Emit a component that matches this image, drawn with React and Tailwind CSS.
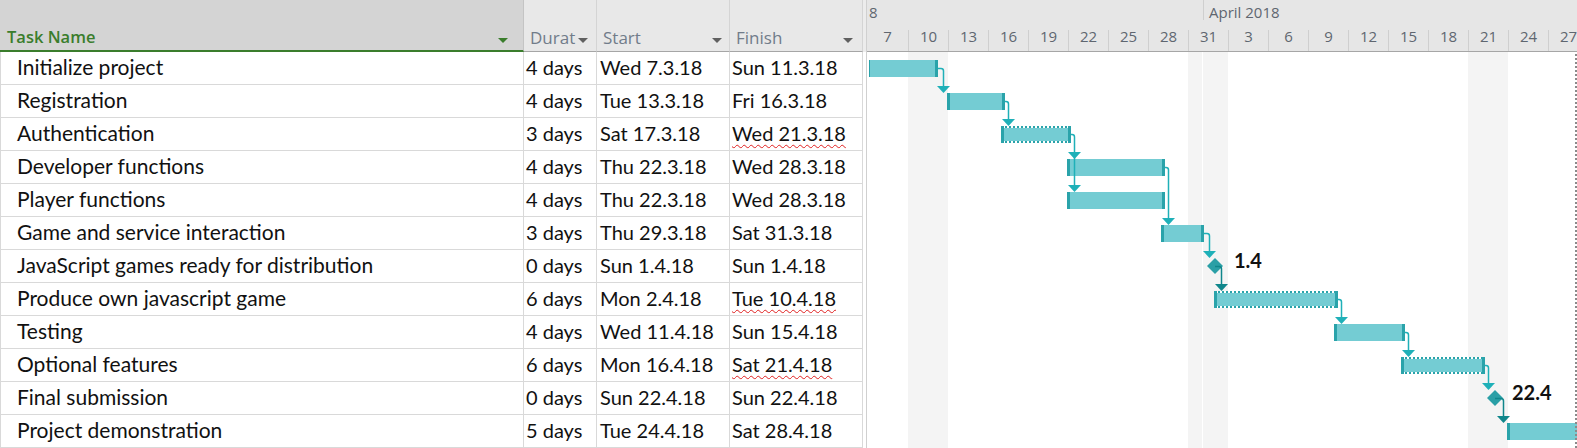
import React from "react";

const ROWS = [
  { name: "Initialize project", dur: "4 days", start: "Wed 7.3.18", finish: "Sun 11.3.18" },
  { name: "Registration", dur: "4 days", start: "Tue 13.3.18", finish: "Fri 16.3.18" },
  { name: "Authentication", dur: "3 days", start: "Sat 17.3.18", finish: "Wed 21.3.18", wavy: true },
  { name: "Developer functions", dur: "4 days", start: "Thu 22.3.18", finish: "Wed 28.3.18" },
  { name: "Player functions", dur: "4 days", start: "Thu 22.3.18", finish: "Wed 28.3.18" },
  { name: "Game and service interaction", dur: "3 days", start: "Thu 29.3.18", finish: "Sat 31.3.18" },
  { name: "JavaScript games ready for distribution", dur: "0 days", start: "Sun 1.4.18", finish: "Sun 1.4.18" },
  { name: "Produce own javascript game", dur: "6 days", start: "Mon 2.4.18", finish: "Tue 10.4.18", wavy: true },
  { name: "Testing", dur: "4 days", start: "Wed 11.4.18", finish: "Sun 15.4.18" },
  { name: "Optional features", dur: "6 days", start: "Mon 16.4.18", finish: "Sat 21.4.18", wavy: true },
  { name: "Final submission", dur: "0 days", start: "Sun 22.4.18", finish: "Sun 22.4.18" },
  { name: "Project demonstration", dur: "5 days", start: "Tue 24.4.18", finish: "Sat 28.4.18" },
];

const TICKS = ["7", "10", "13", "16", "19", "22", "25", "28", "31", "3", "6", "9", "12", "15", "18", "21", "24", "27"];

const X0 = 867;
const Y0 = 52;
const X = (a) => a - X0;
const Y = (a) => a - Y0;

const BARS = [
  { row: 0, x1: 869, x2: 937, lcap: 1 },
  { row: 1, x1: 947, x2: 1004 },
  { row: 2, x1: 1001, x2: 1070, dotted: true },
  { row: 3, x1: 1067, x2: 1164 },
  { row: 4, x1: 1067, x2: 1164 },
  { row: 5, x1: 1161, x2: 1203 },
  { row: 7, x1: 1214, x2: 1337, dotted: true },
  { row: 8, x1: 1334, x2: 1404 },
  { row: 9, x1: 1401, x2: 1484, dotted: true },
  { row: 11, x1: 1507, x2: 1600 },
];

const LINKS = [
  { x2: 937, yc: 68, cx: 943, tips: [93] },
  { x2: 1004, yc: 101, cx: 1008, tips: [126] },
  { x2: 1070, yc: 134, cx: 1074, tips: [159, 192] },
  { x2: 1164, yc: 167, cx: 1168, tips: [225] },
  { x2: 1203, yc: 233, cx: 1209, tips: [258] },
  { x2: 1337, yc: 299, cx: 1341, tips: [324] },
  { x2: 1404, yc: 332, cx: 1408, tips: [357] },
  { x2: 1484, yc: 365, cx: 1488, tips: [390] },
];

const MILESTONES = [
  { cx: 1215, cy: 266, lx: 1221, tip: 291, label: "1.4", tx: 1234, ty: 268 },
  { cx: 1495, cy: 398, lx: 1503, tip: 423, label: "22.4", tx: 1512, ty: 400 },
];

const TEAL = "#74ccd3";
const CAP = "#2aa3aa";
const LINE = "#1fb0b8";
const DARK = "#0f868b";

function Arrow({ cx, tip, color }) {
  return (
    <polygon
      points={`${X(cx) - 6.5},${Y(tip) - 7} ${X(cx) + 6.5},${Y(tip) - 7} ${X(cx)},${Y(tip)}`}
      fill={color}
    />
  );
}

function GanttChart() {
  return (
    <svg width="710" height="396" className="block">
      {[908, 1188, 1468].map((a) => (
        <rect key={a} x={X(a)} y={0} width={40} height={396} fill="#f4f4f4" />
      ))}
      <rect x={X(1202)} y={0} width={1} height={396} fill="#ffffff" />

      {BARS.map((b, i) => {
        const top = 8 + 33 * b.row;
        const w = b.x2 - b.x1 + 1;
        return (
          <g key={i}>
            <rect x={X(b.x1)} y={top} width={w} height={17} fill={TEAL} />
            {b.dotted && (
              <g>
                <line x1={X(b.x1)} x2={X(b.x2) + 1} y1={top + 1} y2={top + 1} stroke="#ffffff" strokeWidth={2} />
                <line x1={X(b.x1)} x2={X(b.x2) + 1} y1={top + 1} y2={top + 1} stroke={CAP} strokeWidth={2} strokeDasharray="2 2" />
                <line x1={X(b.x1)} x2={X(b.x2) + 1} y1={top + 16} y2={top + 16} stroke="#ffffff" strokeWidth={2} />
                <line x1={X(b.x1)} x2={X(b.x2) + 1} y1={top + 16} y2={top + 16} stroke={CAP} strokeWidth={2} strokeDasharray="2 2" />
              </g>
            )}
            <rect x={X(b.x1)} y={top} width={b.lcap || 3} height={17} fill={CAP} />
            <rect x={X(b.x2) - 2} y={top} width={3} height={17} fill={CAP} />
          </g>
        );
      })}

      {LINKS.map((l, i) => {
        const last = l.tips[l.tips.length - 1];
        const vx = X(l.cx) + 0.5;
        return (
          <g key={i}>
            <path
              d={`M ${X(l.x2) + 1} ${Y(l.yc) + 0.5} H ${vx - 2.5} Q ${vx} ${Y(l.yc) + 0.5} ${vx} ${Y(l.yc) + 3} V ${Y(last) - 6}`}
              stroke={LINE}
              strokeWidth={1.5}
              fill="none"
            />
            {l.tips.map((t) => (
              <Arrow key={t} cx={l.cx + 0.5} tip={t} color={LINE} />
            ))}
          </g>
        );
      })}

      {MILESTONES.map((m, i) => (
        <g key={i}>
          <polygon
            points={`${X(m.cx)},${Y(m.cy) - 8} ${X(m.cx) + 8},${Y(m.cy)} ${X(m.cx)},${Y(m.cy) + 8} ${X(m.cx) - 8},${Y(m.cy)}`}
            fill="#2a9fa6"
          />
          <path
            d={`M ${X(m.cx)} ${Y(m.cy) + 0.5} H ${X(m.lx) - 2} Q ${X(m.lx) + 0.5} ${Y(m.cy) + 0.5} ${X(m.lx) + 0.5} ${Y(m.cy) + 3} V ${Y(m.tip) - 6}`}
            stroke={DARK}
            strokeWidth={1.5}
            fill="none"
          />
          <Arrow cx={m.lx + 0.5} tip={m.tip} color={DARK} />
          <text
            x={X(m.tx)}
            y={Y(m.ty)}
            fontFamily="Lato, sans-serif"
            fontWeight="700"
            fontSize="20"
            fill="#111111"
          >
            {m.label}
          </text>
        </g>
      ))}

      <line x1={X(1575) + 1} x2={X(1575) + 1} y1={2} y2={396} stroke="#8a8a8a" strokeWidth={2} strokeDasharray="2 2" />
    </svg>
  );
}

function GrayTri() {
  return <span className="mb-[3px] block h-0 w-0 shrink-0 border-x-[5px] border-t-[5px] border-x-transparent border-t-[#606060]" />;
}

export default function App() {
  return (
    <div className="flex h-[448px] w-[1577px] overflow-hidden bg-white font-['Lato',sans-serif] text-[#111]">
      {/* Table */}
      <div className="flex w-[863px] shrink-0 flex-col">
        <div className="flex h-[52px] shrink-0 font-['Open_Sans',sans-serif]">
          <div className="flex w-[524px] shrink-0 items-end justify-between border-b-2 border-r border-b-[#3a7d2c] border-r-[#c4c4c4] bg-[#d4d4d4] pb-[5px] pl-[7px] pr-[15px]">
            <span className="text-[16.5px] font-semibold leading-none text-[#3a7d2c]">Task Name</span>
            <span className="mb-[2px] block h-0 w-0 shrink-0 border-x-[5px] border-t-[5px] border-x-transparent border-t-[#3a7d2c]" />
          </div>
          <div className="flex w-[73px] shrink-0 items-end justify-between border-b border-r border-b-[#a6a6a6] border-r-[#d4d4d4] bg-[#e8e8e8] pb-[5px] pl-[6px] pr-[8px]">
            <span className="text-[17px] leading-none text-[#717c8a]">Durat</span>
            <GrayTri />
          </div>
          <div className="flex w-[133px] shrink-0 items-end justify-between border-b border-r border-b-[#a6a6a6] border-r-[#d4d4d4] bg-[#e8e8e8] pb-[5px] pl-[6px] pr-[7px]">
            <span className="text-[17px] leading-none text-[#717c8a]">Start</span>
            <GrayTri />
          </div>
          <div className="flex w-[133px] shrink-0 items-end justify-between border-b border-r border-b-[#a6a6a6] border-r-[#d4d4d4] bg-[#e8e8e8] pb-[5px] pl-[6px] pr-[9px]">
            <span className="text-[17px] leading-none text-[#717c8a]">Finish</span>
            <GrayTri />
          </div>
        </div>
        {ROWS.map((r, i) => (
          <div key={i} className="flex h-[33px] shrink-0 border-b border-[#d9d9d9] text-[20px]">
            <div className="flex w-[524px] shrink-0 items-center border-x border-[#d9d9d9] pb-[3px] pl-[16px] text-[21px] whitespace-nowrap">{r.name}</div>
            <div className="flex w-[73px] shrink-0 items-center border-r border-[#d9d9d9] pb-[3px] pl-[2px] whitespace-nowrap">{r.dur}</div>
            <div className="flex w-[133px] shrink-0 items-center border-r border-[#d9d9d9] pb-[3px] pl-[3px] whitespace-nowrap">{r.start}</div>
            <div className="flex w-[133px] shrink-0 items-center border-r border-[#d9d9d9] pb-[3px] pl-[2px] whitespace-nowrap">
              {r.wavy ? (
                <span className="underline decoration-[#e02020] decoration-wavy decoration-1 underline-offset-[3px]">{r.finish}</span>
              ) : (
                r.finish
              )}
            </div>
          </div>
        ))}
      </div>

      {/* Split bar */}
      <div className="flex w-[3px] shrink-0 flex-col">
        <div className="h-[52px] shrink-0 bg-[#ececec]" />
        <div className="flex-1 bg-white" />
      </div>

      {/* Gantt */}
      <div className="flex w-[711px] shrink-0 flex-col border-l border-[#d0d0d0] font-['Open_Sans',sans-serif]">
        <div className="flex h-[52px] shrink-0 flex-col border-b border-[#a6a6a6] bg-[#e6e6e6] text-[15px] text-[#5f6670]">
          <div className="flex h-[26px] shrink-0 items-start">
            <div className="h-[20px] w-[336px] shrink-0 pl-[2px] leading-[24px]">8</div>
            <div className="h-[20px] shrink-0 whitespace-nowrap border-l border-[#cfcfcf] pl-[5px] leading-[24px]">April 2018</div>
          </div>
          <div className="flex h-[25px] shrink-0 items-end">
            {TICKS.map((t, i) => (
              <div
                key={i}
                className={
                  i === 0
                    ? "h-[21px] w-[41px] shrink-0 text-center leading-[13px]"
                    : "h-[21px] w-[40px] shrink-0 border-l border-[#cfcfcf] text-center leading-[13px]"
                }
              >
                {t}
              </div>
            ))}
          </div>
        </div>
        <div className="flex-1 overflow-hidden">
          <GanttChart />
        </div>
      </div>
    </div>
  );
}
